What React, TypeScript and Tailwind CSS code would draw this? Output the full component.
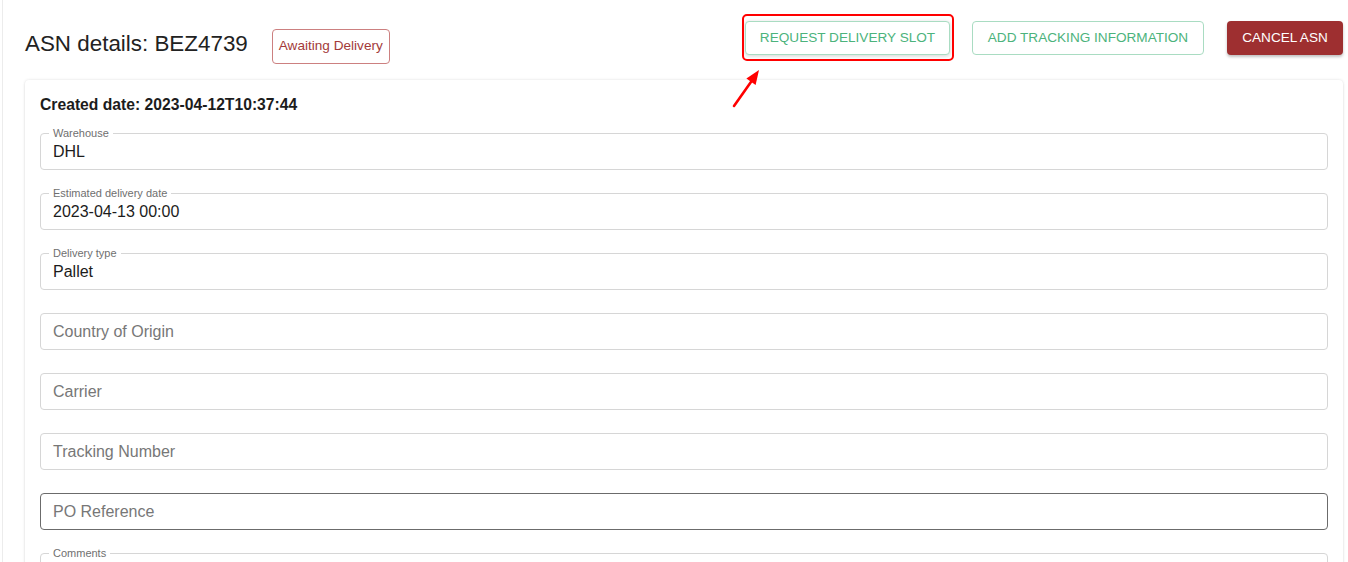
import React from 'react';

type Field = {
  label: string;
  value?: string;
  active?: boolean;
  tall?: boolean;
};

const FIELDS: Field[] = [
  { label: 'Warehouse', value: 'DHL' },
  { label: 'Estimated delivery date', value: '2023-04-13 00:00' },
  { label: 'Delivery type', value: 'Pallet' },
  { label: 'Country of Origin' },
  { label: 'Carrier' },
  { label: 'Tracking Number' },
  { label: 'PO Reference', active: true },
  { label: 'Comments', value: '', tall: true },
];

function OutlinedField({ field }: { field: Field }) {
  const filled = field.value !== undefined;
  const border = field.active ? 'border-[#6b6b6b]' : 'border-[#d6d6d6]';
  return (
    <div
      className={`relative flex ${field.tall ? 'h-[90px] items-start pt-[10px]' : 'h-[37px] items-center'} rounded-[4px] border ${border} pl-[12px]`}
    >
      {filled && (
        <span className="absolute -top-[8px] left-[8px] bg-white px-[4px] text-[11px] leading-[14px] text-[#6f6f6f]">
          {field.label}
        </span>
      )}
      {filled ? (
        <span className="text-[16px] leading-[20px] text-[#1c1c1c]">{field.value}</span>
      ) : (
        <span className="text-[16px] leading-[20px] text-[#777777]">{field.label}</span>
      )}
    </div>
  );
}

export default function App() {
  return (
    <div
      className="flex h-[562px] w-[1348px] overflow-hidden bg-white"
      style={{ fontFamily: '"Liberation Sans", Arial, sans-serif' }}
    >
      {/* Sidebar edge */}
      <div className="w-[2px] shrink-0 bg-white" />
      <div className="w-[1px] shrink-0 bg-[#ececec]" />

      <div className="flex-1 pl-[22px] pr-[5px]">
        {/* Header */}
        <div className="flex h-[80px] items-start justify-between">
          <div className="flex items-start gap-[24px]">
            <h1 className="mt-[31px] text-[22.4px] leading-[26px] text-[#222222]">ASN details: BEZ4739</h1>
            <span className="mt-[29px] flex h-[35px] w-[118px] items-center justify-center rounded-[4px] border border-[#cc8080] text-[13.6px] text-[#a33a3a]">
              Awaiting Delivery
            </span>
          </div>

          <div className="mt-[21px] flex items-start">
            <div className="relative">
              <button className="flex h-[34px] w-[205px] items-center justify-center rounded-[4px] border border-[#a9dcc2] bg-white text-[13.6px] text-[#4cb37c] shadow-[0_1px_4px_rgba(0,0,0,0.18)]">
                REQUEST DELIVERY SLOT
              </button>
              {/* annotation highlight */}
              <div className="pointer-events-none absolute -bottom-[6px] -left-[3px] -right-[4px] -top-[7px] rounded-[5px] border-[2px] border-[#ff0000]" />
              <svg
                className="pointer-events-none absolute -left-[16px] top-[45px]"
                width="36"
                height="44"
                viewBox="0 0 36 44"
              >
                <line x1="5" y1="40" x2="23" y2="14.5" stroke="#ff0000" strokeWidth="2.6" strokeLinecap="round" />
                <polygon points="30,4 26.6,19 17.4,12.6" fill="#ff0000" />
              </svg>
            </div>

            <button className="ml-[22px] flex h-[34px] w-[232px] items-center justify-center rounded-[4px] border border-[#a9dcc2] bg-white text-[13.6px] text-[#4cb37c]">
              ADD TRACKING INFORMATION
            </button>

            <button className="ml-[23px] flex h-[34px] w-[116px] items-center justify-center rounded-[4px] bg-[#9e2f30] text-[13.6px] text-white shadow-[0_2px_3px_rgba(0,0,0,0.25)]">
              CANCEL ASN
            </button>
          </div>
        </div>

        {/* Details card */}
        <div className="rounded-[4px] bg-white px-[15px] pt-[15px] shadow-[0_0_3px_rgba(0,0,0,0.12),0_1px_2px_rgba(0,0,0,0.08)]">
          <h2 className="text-[15.7px] font-bold leading-[20px] text-[#1c1c1c]">Created date: 2023-04-12T10:37:44</h2>
          <div className="mt-[18px] flex flex-col gap-[23px]">
            {FIELDS.map((f) => (
              <OutlinedField key={f.label} field={f} />
            ))}
          </div>
        </div>
      </div>
    </div>
  );
}
